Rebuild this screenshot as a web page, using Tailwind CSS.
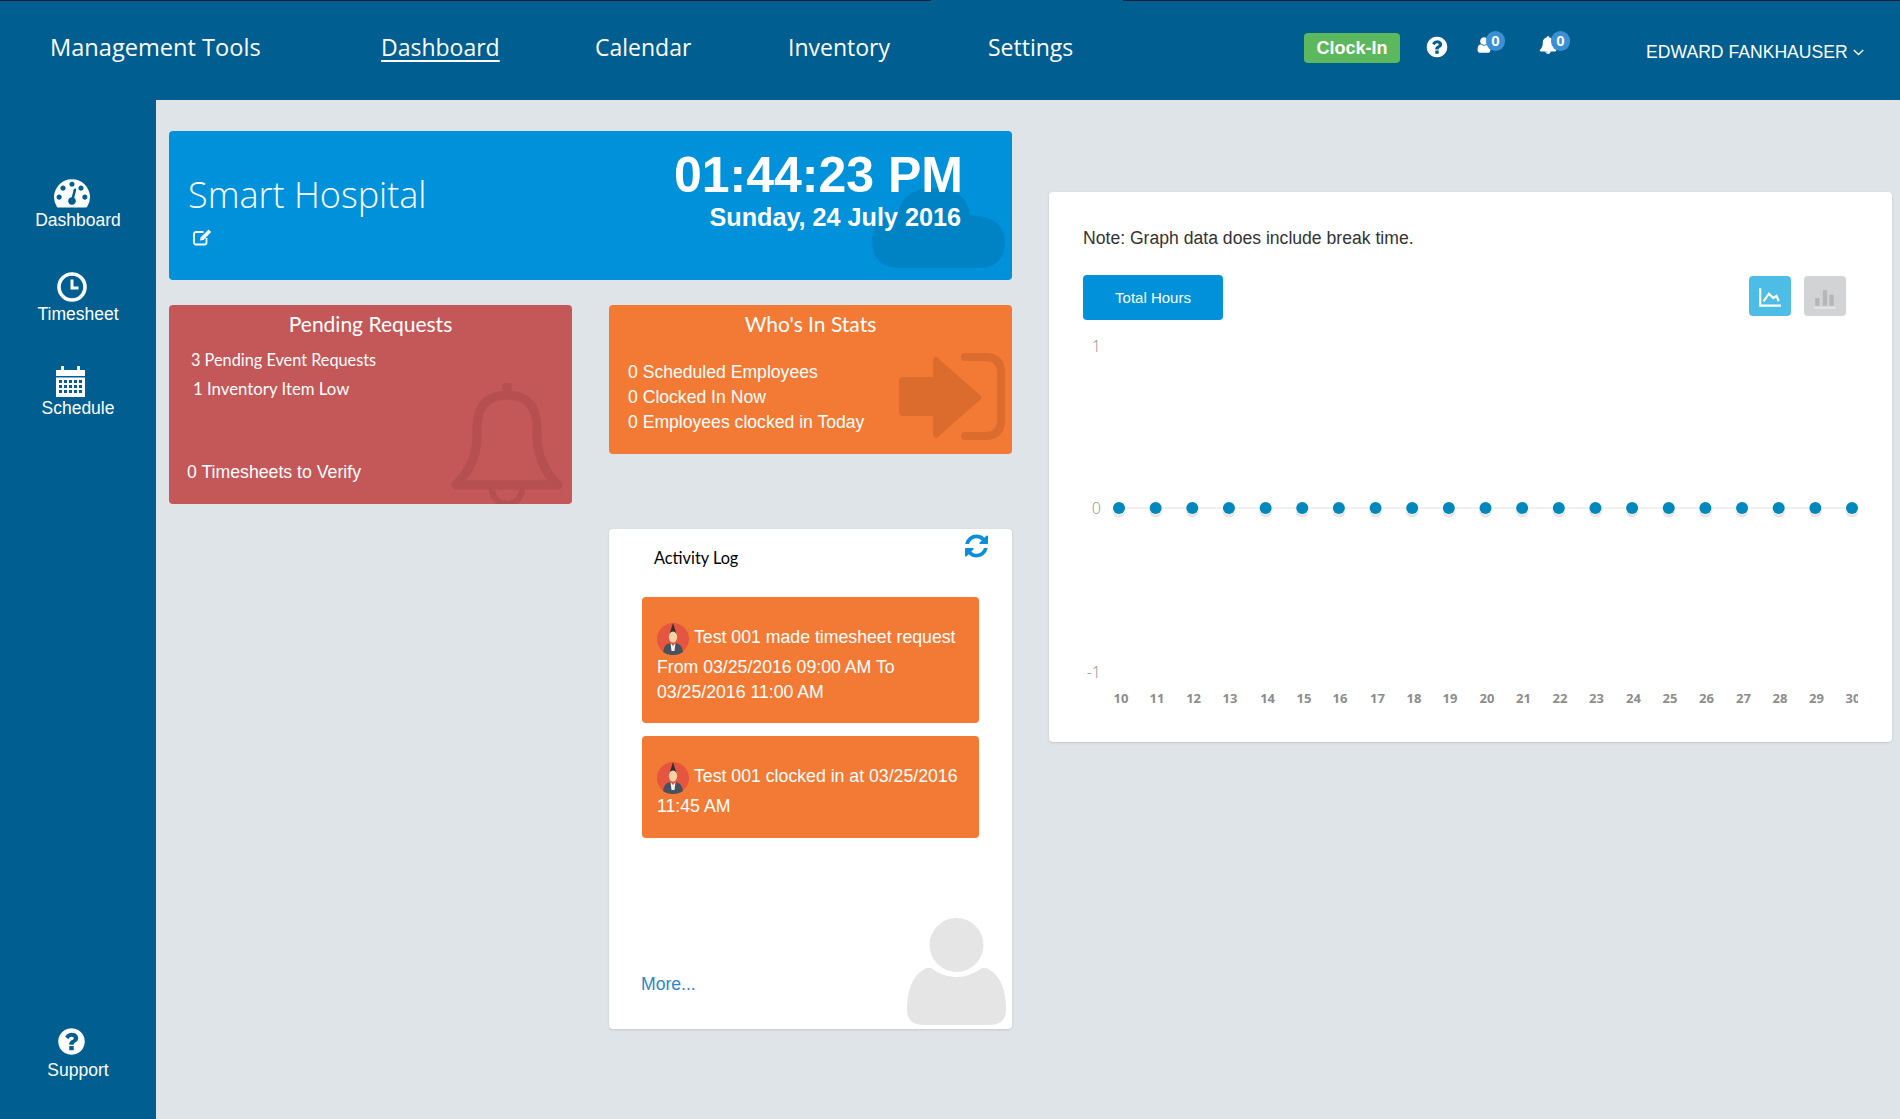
<!DOCTYPE html>
<html lang="en">
  <head>
    <meta charset="UTF-8" />
    <title>Management Tools</title>
    <script src="https://cdn.jsdelivr.net/npm/@tailwindcss/browser@4"></script>
  </head>
  <body class="bg-[#dfe4e8] font-['Liberation_Sans',sans-serif] text-white overflow-hidden">
    <svg class="hidden">
      <defs>
        <symbol id="i-question" viewBox="0 0 1792 1792"><path fill="currentColor" d="M1024 1376v-192q0-14-9-23t-23-9h-192q-14 0-23 9t-9 23v192q0 14 9 23t23 9h192q14 0 23-9t9-23zm256-672q0-88-55.5-163t-138.5-116-170-41q-243 0-371 213-15 24 8 42l132 100q7 6 19 6 16 0 25-12 53-68 86-92 34-24 86-24 48 0 85.5 26t37.5 59q0 38-20 61t-68 45q-63 28-115.5 86.5t-52.5 125.5v36q0 14 9 23t23 9h192q14 0 23-9t9-23q0-19 21.5-49.5t54.5-49.5q32-18 49-28.5t46-35 44.5-48 28-60.5 12.5-81zm384 192q0 209-103 385.5t-279.5 279.5-385.5 103-385.5-103-279.5-279.5-103-385.5 103-385.5 279.5-279.5 385.5-103 385.5 103 279.5 279.5 103 385.5z"/></symbol>
        <symbol id="i-bell" viewBox="0 0 1792 1792"><path fill="currentColor" d="M912 1696q0-16-16-16-59 0-101.5-42.5t-42.5-101.5q0-16-16-16t-16 16q0 73 51.5 124.5t124.5 51.5q16 0 16-16zm816-288q0 52-38 90t-90 38h-448q0 106-75 181t-181 75-181-75-75-181h-448q-52 0-90-38t-38-90q50-42 91-88t85-119.5 74.5-158.5 50-206 19.5-260q0-152 117-282.5t307-158.5q-8-19-8-39 0-40 28-68t68-28 68 28 28 68q0 20-8 39 190 28 307 158.5t117 282.5q0 139 19.5 260t50 206 74.5 158.5 85 119.5 91 88z"/></symbol>
        <symbol id="i-user" viewBox="0 0 1792 1792"><path fill="currentColor" d="M1536 1399q0 109-62.5 187t-150.5 78h-854q-88 0-150.5-78t-62.5-187q0-85 8.5-160.5t31.5-152 58.5-131 94-89 134.5-34.5q131 128 313 128t313-128q76 0 134.5 34.5t94 89 58.5 131 31.5 152 8.5 160.5zm-256-887q0 159-112.5 271.5t-271.5 112.5-271.5-112.5-112.5-271.5 112.5-271.5 271.5-112.5 271.5 112.5 112.5 271.5z"/></symbol>
        <symbol id="i-avatar" viewBox="0 0 32 32">
          <circle cx="16" cy="16" r="16" fill="#e5553f"/>
          <path d="M16 0l2.5 8 1.5 5h-8l1.5-5z" fill="#33302f"/>
          <ellipse cx="16" cy="14" rx="4.2" ry="5.5" fill="#f8d2a4"/>
          <path d="M6 29q1-8 7-9l3 3 3-3q6 1 7 9q-4 3-10 3t-10-3z" fill="#46525c"/>
          <path d="M13.5 20l2.5 3 2.5-3-1 8h-3z" fill="#f3f3f3"/>
        </symbol>
        <g id="dot">
          <circle cy="3" r="6.5" fill="#e6e6e6"/>
          <circle r="6.5" fill="#ffffff"/>
          <circle r="6" fill="#0088bd"/>
        </g>
      </defs>
    </svg>

    <!-- top nav -->
    <header class="relative h-[100px] bg-[#005e90] flex items-start">
      <div class="absolute left-0 top-0 h-px w-[931px] bg-[#0b2239]"></div>
      <div class="absolute right-0 top-0 h-px w-[777px] bg-[#0b2239]"></div>
      <a class="ml-[50px] mt-[30px] w-[332px] font-['Open_Sans',sans-serif] text-[23.6px] leading-[34px]">Management Tools</a>
      <nav class="flex mt-[30px] font-['Open_Sans',sans-serif] text-[23px] leading-[34px]">
        <a class="w-[214px] -ml-px underline decoration-2 underline-offset-4">Dashboard</a>
        <a class="w-[193px]">Calendar</a>
        <a class="w-[200px]">Inventory</a>
        <a class="w-[316px]">Settings</a>
      </nav>
      <button class="mt-[33px] w-[96px] h-[30px] rounded bg-[#5cb85c] font-bold text-[18px] leading-[30px] text-center">Clock-In</button>
      <svg class="mt-[35px] ml-[25px] w-[24px] h-[24px]"><use href="#i-question"/></svg>
      <div class="relative mt-[36px] ml-[26px] w-[18px] h-[18px]">
        <svg class="w-[18px] h-[18px]"><use href="#i-user"/></svg>
        <span class="absolute left-[11px] top-[-5px] w-[19px] h-[20px] rounded-full bg-[#3b8fd5] text-[15px] leading-[19px] font-bold text-center">0</span>
      </div>
      <div class="relative mt-[36px] ml-[46px] w-[18px] h-[18px]">
        <svg class="w-[18px] h-[18px]"><use href="#i-bell"/></svg>
        <span class="absolute left-[12px] top-[-5px] w-[19px] h-[20px] rounded-full bg-[#3b8fd5] text-[15px] leading-[19px] font-bold text-center">0</span>
      </div>
      <div class="mt-[41px] ml-[89px] flex items-center text-[17.6px] leading-[22px] whitespace-nowrap">
        EDWARD FANKHAUSER
        <svg class="ml-[5px] w-[11px] h-[7px]" viewBox="0 0 11 7"><path d="M.8.9l4.700 4.700L10.200.9" fill="none" stroke="currentColor" stroke-width="1.400"/></svg>
      </div>
    </header>

    <div class="flex h-[1019px]">
      <!-- side nav -->
      <aside class="w-[156px] bg-[#005e90] flex flex-col text-[17.5px] leading-[22px] text-center">
        <a class="block mt-[74px]">
          <svg class="ml-[54px] w-[36px] h-[36px] -mb-[1px]" viewBox="0 0 1792 1792"><path fill="currentColor" d="M384 1152q0-53-37.5-90.5t-90.5-37.5-90.5 37.500-37.5 90.5 37.5 90.5 90.5 37.5 90.5-37.5 37.5-90.5zm192-448q0-53-37.5-90.5t-90.5-37.5-90.5 37.5-37.5 90.5 37.5 90.5 90.5 37.5 90.5-37.5 37.5-90.5zm428 481l101-382q6-26-7.5-48.5t-38.5-29.5-48 6.5-30 39.5l-101 382q-60 5-107 43.5t-63 98.5q-20 77 20 146t117 89 146-20 89-117q16-60-6-117t-72-91zm660-33q0-53-37.5-90.5t-90.5-37.5-90.5 37.5-37.5 90.5 37.5 90.5 90.5 37.5 90.5-37.5 37.5-90.5zm-640-640q0-53-37.5-90.5t-90.5-37.5-90.5 37.5-37.5 90.5 37.5 90.5 90.5 37.5 90.5-37.5 37.5-90.5zm448 192q0-53-37.5-90.5t-90.5-37.5-90.5 37.5-37.5 90.5 37.5 90.5 90.5 37.5 90.5-37.5 37.5-90.5zm320 448q0 261-141 483-19 29-54 29h-1402q-35 0-54-29-141-221-141-483 0-182 71-348t191-286 286-191 348-71 348 71 286 191 191 286 71 348z"/></svg>
          <span class="block">Dashboard</span>
        </a>
        <a class="block mt-[41px]">
          <svg class="ml-[57px] w-[30px] h-[30px] mb-[1px]" viewBox="0 0 30 30"><circle cx="15" cy="15" r="13" fill="none" stroke="currentColor" stroke-width="3.6"/><path d="M15 7.5V16h6.5" fill="none" stroke="currentColor" stroke-width="3"/></svg>
          <span class="block">Timesheet</span>
        </a>
        <a class="block mt-[41px]">
          <svg class="ml-[56px] w-[30px] h-[32px] -mb-[1px]" viewBox="0 0 30 32"><path fill="currentColor" d="M0 4h5V0h3v4h13V0h3v4h5v6H0z"/><path fill="currentColor" fill-rule="evenodd" d="M0 11.5h29V31H0zM3 14v3h3v-3zm5 0v3h3v-3zm5 0v3h3v-3zm5 0v3h3v-3zm5 0v3h3v-3zM3 19v3h3v-3zm5 0v3h3v-3zm5 0v3h3v-3zm5 0v3h3v-3zm5 0v3h3v-3zM3 24v3h3v-3zm5 0v3h3v-3zm5 0v3h3v-3zm5 0v3h3v-3zm5 0v3h3v-3z"/></svg>
          <span class="block">Schedule</span>
        </a>
        <a class="block mt-auto mb-[38px]">
          <svg class="ml-[56px] w-[31px] h-[31px] mb-[2px]"><use href="#i-question"/></svg>
          <span class="block">Support</span>
        </a>
      </aside>

      <main class="flex pl-[13px]">
        <!-- left column -->
        <div class="w-[843px] pt-[31px]">
          <section class="relative h-[149px] rounded bg-[#0091db] overflow-hidden flex justify-between">
            <svg class="absolute left-[703px] top-[57px] w-[133px] h-[80px]" viewBox="0 0 133 80"><path fill="#0083c5" d="M0 52Q0 30 25 28 30 0 62 0q32 0 36 27 35 2 35 27 0 26-28 26H28Q0 80 0 52z"/></svg>
            <div class="relative pl-[19px] pt-[40px]">
              <h1 class="font-['Open_Sans',sans-serif] font-light text-[36px] leading-[48px]">Smart Hospital</h1>
              <svg class="mt-[9px] ml-[5px] w-[20px] h-[18px]" viewBox="0 0 20 18"><path d="M13.5 10v4.500a2 2 0 0 1-2 2H3a2 2 0 0 1-2-2V6a2 2 0 0 1 2-2h7.5" fill="none" stroke="currentColor" stroke-width="1.8"/><path d="M7 12.5l.8-3.200L15.600 1.500l2.600 2.600-7.800 7.800z" fill="currentColor"/></svg>
            </div>
            <div class="relative pr-[49px] pt-[15px] text-right font-bold">
              <div class="text-[50px] leading-[58px]">01:44:23 PM</div>
              <div class="mr-[2px] -mt-px text-[25.2px] leading-[28px]">Sunday, 24 July 2016</div>
            </div>
          </section>

          <div class="flex gap-[37px] mt-[25px]">
            <section class="relative w-[403px] h-[199px] rounded bg-[#c45758] overflow-hidden">
              <svg class="absolute left-[281px] top-[78px] w-[114px] h-[121px]" viewBox="0 0 114 121"><path d="M57 3v9M27 46Q27 12 57 12Q87 12 87 46V55Q88 82 108 102H6Q26 82 27 55z" fill="none" stroke="#b64f50" stroke-width="9" stroke-linejoin="round" stroke-linecap="round"/><path d="M42 106a15 15 0 0 0 30 0" fill="none" stroke="#b64f50" stroke-width="6"/></svg>
              <h2 class="relative pt-[3px] text-center font-['Lato',sans-serif] text-[21px] leading-[32px]">Pending Requests</h2>
              <p class="relative ml-[22px] mt-[9px] font-['Lato',sans-serif] text-[16.3px] leading-[22px]">3 Pending Event Requests</p>
              <p class="relative ml-[24px] mt-[7px] font-['Lato',sans-serif] text-[16.8px] leading-[22px]">1 Inventory Item Low</p>
              <p class="absolute left-[18px] top-[155px] text-[17.7px] leading-[24px]">0 Timesheets to Verify</p>
            </section>
            <div class="w-[403px]">
              <section class="relative h-[149px] rounded bg-[#f37a35] overflow-hidden">
                <svg class="absolute left-[290px] top-[47px] w-[108px] h-[90px]" viewBox="0 0 108 90"><path fill="#db6c2e" d="M34 8q2-6 6-1L82 44q1 1 0 3L40 84q-4 4-6-1V64H4q-4 0-4-4V29q0-4 4-4H34z"/><path d="M66 5h20q16 0 16 16v47q0 16-16 16H66" fill="none" stroke="#db6c2e" stroke-width="8" stroke-linecap="round"/></svg>
                <h2 class="relative pt-[3px] text-center font-['Lato',sans-serif] text-[21px] leading-[32px]">Who's In Stats</h2>
                <div class="relative mt-[20px] pl-[19px] text-[17.6px] leading-[25px]">
                  <p>0 Scheduled Employees</p>
                  <p>0 Clocked In Now</p>
                  <p>0 Employees clocked in Today</p>
                </div>
              </section>

              <section class="relative mt-[75px] h-[500px] rounded bg-white overflow-hidden shadow-sm px-[33px]">
                <svg class="absolute right-[6px] bottom-[4px] w-[99px] h-[107px]" viewBox="0 0 99 107"><circle cx="49.5" cy="27" r="27" fill="#e5e5e5"/><path d="M24 50q-4-1-8 2Q0 62 0 92q0 15 17 15h65q17 0 17-15 0-30-16-40-4-3-8-2-12 9-25.500 9T24 50z" fill="#e5e5e5"/></svg>
                <svg class="absolute left-[356px] top-[5px] w-[23px] h-[24px] text-[#0c8fd8]" viewBox="128 128 1536 1536"><path fill="currentColor" d="M1639 1056q0 5-1 7-64 268-268 434.500t-478 166.500q-146 0-282.500-55t-243.500-157l-129 129q-19 19-45 19t-45-19-19-45v-448q0-26 19-45t45-19h448q26 0 45 19t19 45-19 45l-137 137q71 66 161 102t187 36q134 0 250-65t186-179q11-17 53-117 8-23 30-23h192q13 0 22.500 9.500t9.500 22.500zm25-800v448q0 26-19 45t-45 19h-448q-26 0-45-19t-19-45 19-45l138-138q-148-137-349-137-134 0-250 65t-186 179q-11 17-53 117-8 23-30 23h-199q-13 0-22.500-9.500t-9.500-22.500v-7q65-268 270-434.500t480-166.500q146 0 284 55.500t245 156.500l130-129q19-19 45-19t45 19 19 45z"/></svg>
                <h3 class="pl-[12px] pt-[18px] font-['Lato',sans-serif] text-[16.3px] leading-[22px] text-black">Activity Log</h3>
                <div class="mt-[28px] rounded-sm bg-[#f37a35] h-[126px] pl-[15px] pr-[10px] pt-[26px] text-[17.7px] leading-[25px]">
                  <svg class="inline-block align-[-12px] w-[32px] h-[32px] mr-[5px]"><use href="#i-avatar"/></svg>Test 001 made timesheet request From 03/25/2016 09:00 AM To 03/25/2016 11:00 AM
                </div>
                <div class="mt-[13px] rounded-sm bg-[#f37a35] h-[102px] pl-[15px] pr-[10px] pt-[26px] text-[17.7px] leading-[25px]">
                  <svg class="inline-block align-[-12px] w-[32px] h-[32px] mr-[5px]"><use href="#i-avatar"/></svg>Test 001 clocked in at 03/25/2016 11:45 AM
                </div>
                <a class="absolute left-[32px] top-[444px] text-[17.6px] leading-[22px] text-[#2a88c8]">More...</a>
              </section>
            </div>
          </div>
        </div>

        <!-- graph card -->
        <section class="ml-[37px] mt-[92px] w-[843px] h-[550px] rounded bg-white shadow-sm pl-[34px] text-[#333]">
          <p class="pt-[35px] text-[17.6px] leading-[22px]">Note: Graph data does include break time.</p>
          <div class="flex items-start mt-[26px] pr-[46px]">
            <button class="w-[140px] h-[45px] pt-px rounded-sm bg-[#0091db] text-white text-[15px]">Total Hours</button>
            <button class="ml-auto mt-[1px] w-[42px] h-[40px] rounded bg-[#4dbde5] flex items-center justify-center">
              <svg class="w-[24px] h-[24px] mt-[3px]" viewBox="0 0 22 22"><path d="M2 2v16h19" fill="none" stroke="#fff" stroke-width="2"/><path d="M5 14l5-7 4 4 3-2 2 5" fill="none" stroke="#fff" stroke-width="2"/></svg>
            </button>
            <button class="ml-[13px] mt-[1px] w-[42px] h-[40px] rounded bg-[#d1d3d5] flex items-center justify-center">
              <svg class="w-[24px] h-[24px] mt-[3px]" viewBox="0 0 22 22"><path d="M2 11h4v7H2zM9 4h4v14H9zM15 8h4v10h-4z" fill="#b4b6b8"/><path d="M1 20h20" stroke="#e3e4e5" stroke-width="2"/></svg>
            </button>
          </div>
          <svg class="block mt-[10px] w-[775px] h-[380px]" viewBox="0 0 775 380" font-family="Open Sans, sans-serif">
            <line x1="30" y1="178" x2="775" y2="178" stroke="#f0f0f0" stroke-width="2"/>
            <g font-size="16" fill="#8f8f8f" text-anchor="end" font-weight="300">
              <text x="18" y="22">1</text>
              <text x="18" y="184">0</text>
              <text x="18" y="348">-1</text>
            </g>
            <use href="#dot" x="36" y="178"/><use href="#dot" x="72.65" y="178"/><use href="#dot" x="109.3" y="178"/><use href="#dot" x="145.95" y="178"/><use href="#dot" x="182.6" y="178"/><use href="#dot" x="219.25" y="178"/><use href="#dot" x="255.9" y="178"/><use href="#dot" x="292.55" y="178"/><use href="#dot" x="329.2" y="178"/><use href="#dot" x="365.85" y="178"/><use href="#dot" x="402.5" y="178"/><use href="#dot" x="439.15" y="178"/><use href="#dot" x="475.8" y="178"/><use href="#dot" x="512.45" y="178"/><use href="#dot" x="549.1" y="178"/><use href="#dot" x="585.75" y="178"/><use href="#dot" x="622.4" y="178"/><use href="#dot" x="659.05" y="178"/><use href="#dot" x="695.7" y="178"/><use href="#dot" x="732.35" y="178"/><use href="#dot" x="769" y="178"/>
            <g font-size="13" font-weight="700" fill="#8d8d8d" text-anchor="middle">
              <text x="38" y="373">10</text><text x="74" y="373">11</text><text x="110.6" y="373">12</text><text x="147" y="373">13</text><text x="184.6" y="373">14</text><text x="221" y="373">15</text><text x="257" y="373">16</text><text x="294.55" y="373">17</text><text x="331" y="373">18</text><text x="367" y="373">19</text><text x="404" y="373">20</text><text x="440.5" y="373">21</text><text x="477" y="373">22</text><text x="513.5" y="373">23</text><text x="550.5" y="373">24</text><text x="587" y="373">25</text><text x="623.5" y="373">26</text><text x="660.5" y="373">27</text><text x="697" y="373">28</text><text x="733.5" y="373">29</text><text x="770" y="373">30</text>
            </g>
          </svg>
        </section>
      </main>
    </div>
  </body>
</html>
